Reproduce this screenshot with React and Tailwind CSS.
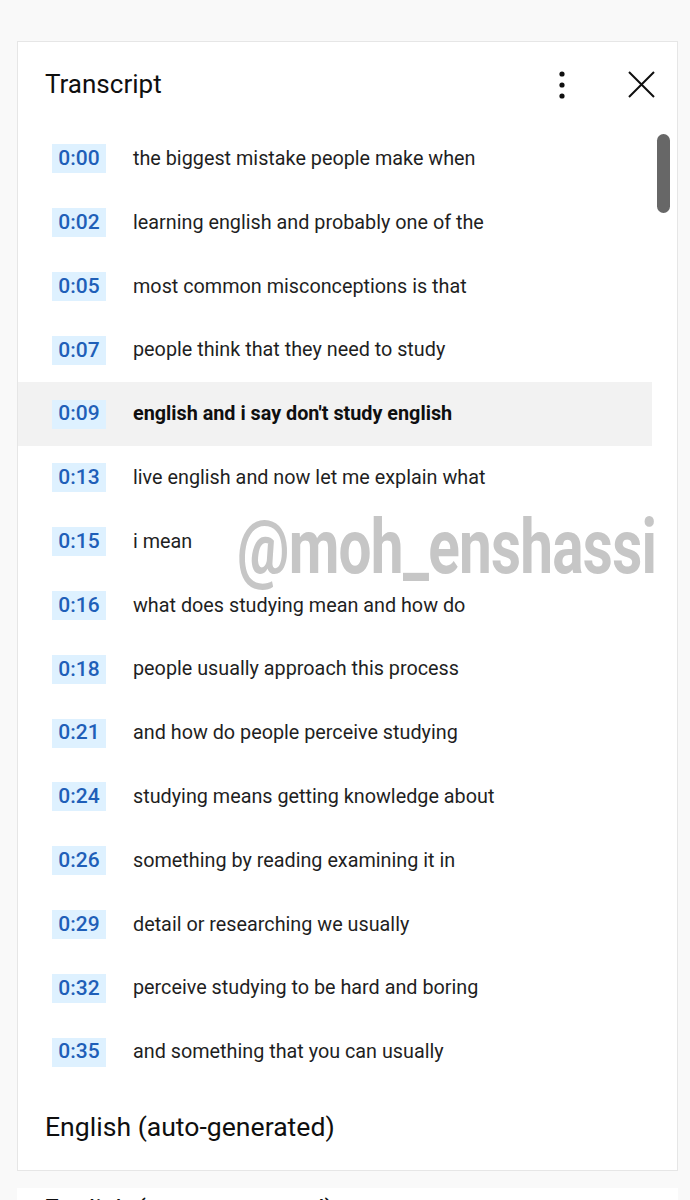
import React from 'react';

const lines = [
  ['0:00', 'the biggest mistake people make when'],
  ['0:02', 'learning english and probably one of the'],
  ['0:05', 'most common misconceptions is that'],
  ['0:07', 'people think that they need to study'],
  ['0:09', "english and i say don't study english"],
  ['0:13', 'live english and now let me explain what'],
  ['0:15', 'i mean'],
  ['0:16', 'what does studying mean and how do'],
  ['0:18', 'people usually approach this process'],
  ['0:21', 'and how do people perceive studying'],
  ['0:24', 'studying means getting knowledge about'],
  ['0:26', 'something by reading examining it in'],
  ['0:29', 'detail or researching we usually'],
  ['0:32', 'perceive studying to be hard and boring'],
  ['0:35', 'and something that you can usually'],
];

const App = () => {
  return (
    <div className="h-[1200px] bg-[#f9f9f9] pt-[41px] font-['Roboto',sans-serif] overflow-hidden">
      {/* panneau transcript */}
      <div className="relative mx-[17px] w-[661px] bg-white border border-[#e6e6e6]">
        <div className="flex items-center h-[85px] pl-[27px] pr-[22px]">
          <h2 className="flex-1 text-[26px] text-[#0f0f0f]">Transcript</h2>
          <button className="w-[30px] h-[30px] flex items-center justify-center mr-[50px]">
            <svg width="6" height="28" viewBox="0 0 6 28">
              <circle cx="3" cy="3" r="2.6" fill="#0f0f0f" />
              <circle cx="3" cy="14" r="2.6" fill="#0f0f0f" />
              <circle cx="3" cy="25" r="2.6" fill="#0f0f0f" />
            </svg>
          </button>
          <button className="w-[28px] h-[28px] flex items-center justify-center">
            <svg width="27" height="27" viewBox="0 0 27 27">
              <path d="M1 1 L26 26 M26 1 L1 26" stroke="#0f0f0f" strokeWidth="2" />
            </svg>
          </button>
        </div>

        <div className="flex">
          <div className="w-[634px]">
            {lines.map(([time, text], i) => (
              <div
                key={time}
                className={`flex items-center h-[63.8px] pl-[34px] ${i === 4 ? 'bg-[#f2f2f2]' : ''}`}
              >
                <span className="w-[54px] h-[29px] flex items-center justify-center bg-[#def1ff] text-[#1f5fb8] text-[21px] font-medium">
                  {time}
                </span>
                <span
                  className={`ml-[27px] text-[19.8px] ${i === 4 ? 'font-bold text-[#0f0f0f]' : 'text-[#1f1f1f]'}`}
                >
                  {text}
                </span>
              </div>
            ))}
          </div>
          {/* barre de défilement */}
          <div className="flex-1 pl-[5px]">
            <div className="w-[13px] h-[79px] mt-[7px] rounded-full bg-[#676767]" />
          </div>
        </div>

        <div className="h-[86px] flex items-center pl-[27px]">
          <span className="text-[26.6px] text-[#0f0f0f]">English (auto-generated)</span>
        </div>

        {/* filigrane */}
        <div className="absolute left-[219px] top-[467px] text-[76px] font-bold text-[#c6c6c6] leading-none origin-left scale-x-[0.77] tracking-[-1px] pointer-events-none">
          @moh_enshassi
        </div>
      </div>

      <div className="mx-[17px] w-[661px] mt-[17px] bg-white h-[60px] pl-[27px] pt-[1px]">
        <span className="text-[26.6px] text-[#0f0f0f]">English (auto-generated)</span>
      </div>
    </div>
  );
};

export default App;
